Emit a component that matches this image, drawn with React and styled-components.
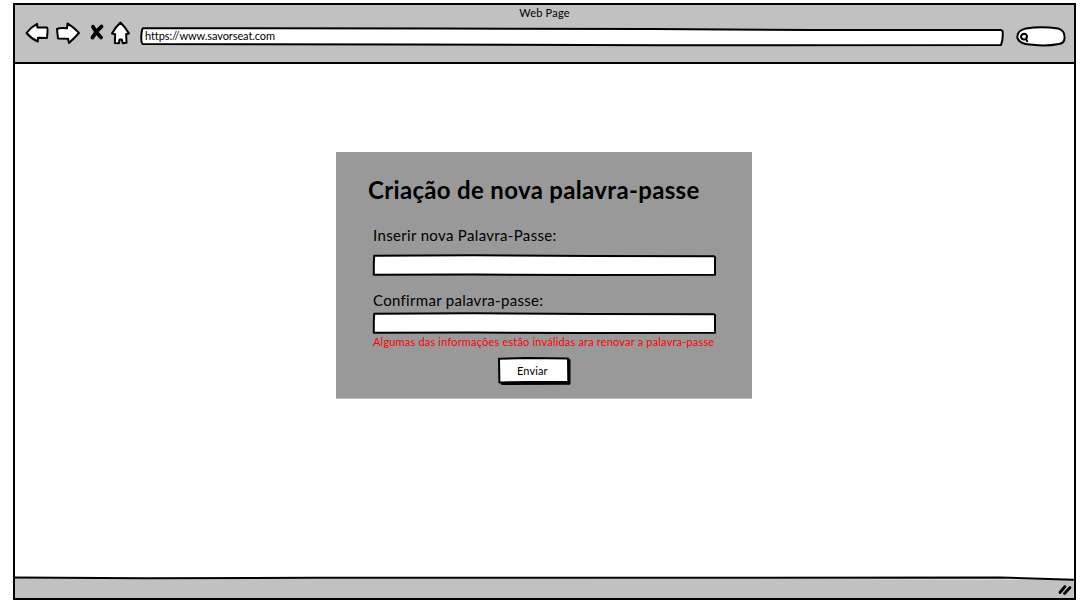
import React from "react";
import styled, { createGlobalStyle } from "styled-components";

const GlobalStyle = createGlobalStyle`
  * { box-sizing: border-box; }
  body { margin: 0; background: #fff; color: #000; font-family: Lato, "Open Sans", sans-serif; overflow: hidden; }
`;

const Page = styled.div`
  width: 1092px;
  height: 605px;
  padding: 3px 16px 5px 13px;
`;

const Browser = styled.div`
  height: 597px;
  display: flex;
  flex-direction: column;
  border: 2px solid #000;
  background: #fff;
`;

const Chrome = styled.header`
  height: 59px;
  flex: none;
  background: #c1c1c1;
  border-bottom: 2px solid #000;
`;

const Text = styled.span`
  display: block;
  white-space: nowrap;
  font-size: ${(p) => p.$size || 11}px;
  line-height: ${(p) => p.$line || 14}px;
  letter-spacing: ${(p) => p.$track || 0}px;
  font-weight: ${(p) => (p.$bold ? 700 : 400)};
  color: ${(p) => p.$color || "#000"};
`;

const WindowTitle = styled.div`
  height: 15px;
  padding-top: 1px;
  display: flex;
  justify-content: center;
`;

const Toolbar = styled.nav`
  display: flex;
  align-items: flex-start;
  padding-left: 10px;
`;

const Icon = styled.svg`
  display: block;
  flex: none;
  overflow: visible;
  fill: #fff;
  stroke: #000;
  stroke-width: 2;
  stroke-linejoin: round;
  stroke-linecap: round;
`;

const CrossStroke = styled.path`
  fill: none;
  stroke-width: 3.8;
`;

const Sketch = styled.div`
  position: relative;
  flex: none;
  width: ${(p) => p.$w}px;
  height: ${(p) => p.$h}px;
`;

const Outline = styled(Icon)`
  position: absolute;
  inset: 0;
`;

const AddressBar = styled(Sketch)`
  margin: 7px 0 0 11px;
`;

const Address = styled(Text)`
  position: relative;
  padding: 2px 0 0 5px;
`;

const SearchBox = styled(Sketch)`
  margin: 6px 0 0 10px;
`;

const Content = styled.main`
  flex: 1;
  display: flex;
  justify-content: center;
  align-items: flex-start;
  padding: 88px 1px 0 0;
`;

const Panel = styled.form`
  width: 416px;
  height: 247px;
  padding: 24px 36px 0 37px;
  background: #999;
  border-bottom: 1px solid #bbb;
  display: flex;
  flex-direction: column;
`;

const Heading = styled.h1`
  margin: 0 0 20px -5px;
  height: 30px;
  font: inherit;
`;

const Label = styled.label`
  height: ${(p) => p.$h}px;
`;

const Gap = styled.div`
  height: 15px;
`;

const ErrorLine = styled.div`
  height: 23px;
  padding-top: 1px;
`;

const SendButton = styled(Sketch)`
  margin-left: 124px;
  display: flex;
  padding: 8px 0 0 20px;
`;

const ButtonLabel = styled(Text)`
  position: relative;
`;

const ButtonShadow = styled.path`
  fill: #000;
`;

const StatusBar = styled.footer`
  height: 21px;
  flex: none;
  display: flex;
  justify-content: flex-end;
  align-items: flex-start;
  position: relative;
`;

const StatusFill = styled.path`
  fill: #c1c1c1;
  stroke: none;
`;

const Grip = styled(Icon)`
  position: relative;
  margin: 7px 2px 0 0;
  stroke-width: 2.8;
`;

function Field() {
  return (
    <Sketch $w={343} $h={21}>
      <Outline width="343" height="21">
        <path d="M1.2 1.7 L100 1.3 L220 1.9 L341 2.2 Q342.5 2.6 342 5 L342 20.8 L210 21 L100 20.6 L.8 20.8 L.8 10 Z" />
      </Outline>
    </Sketch>
  );
}

export default function App() {
  return (
    <>
      <GlobalStyle />
      <Page>
        <Browser>
          <Chrome>
            <WindowTitle><Text $track={0.22}>Web Page</Text></WindowTitle>
            <Toolbar>
              <Icon width="104" height="26" viewBox="25 20 104 26">
                <path d="M26.5 33 Q31 27 37 23.8 L37.5 27.6 L47 27.5 Q48 29 47.5 32 L47 38 L38 37.7 L37.8 41.5 Q31 38.5 26.5 33 Z" />
                <path d="M57 29 Q60 27.5 67 28.3 L67.5 23.4 Q74 27.5 79 33 Q74 38.5 69 43 L68 38.7 L58 38.4 L57.5 34 Z" />
                <CrossStroke d="M93 26.8 Q96 32.5 101 37.5 M101.5 26.5 Q96 31 92.5 37.5" />
                <path d="M120.5 22.5 Q125 27 129 33.5 L126.2 34 L126.5 42.7 L122.7 43.3 L121.8 39.5 L119.5 39.5 L119 43.2 L114.8 43 L115.2 34.3 L112 33.5 Q115 27.5 120.5 22.5 Z" />
              </Icon>
              <AddressBar $w={866} $h={20}>
                <Outline width="866" height="20">
                  <path d="M3 1.2 L300 1.5 L510 2 L670 3 L860.5 3 Q863.2 3 862.7 7 Q863 13 861 18 L520 18.2 L270 17.5 L3 17 Q1 16 1.3 10 Q1.5 3 3 1.2 Z" />
                </Outline>
                <Address $track={-0.09}>https://www.savorseat.com</Address>
              </AddressBar>
              <SearchBox $w={50} $h={22}>
                <Outline width="50" height="22">
                  <path d="M10 2.4 Q25 0 42 2.4 Q49 5 48.5 11 Q49 17 43 18 Q30 20.5 17 18.8 Q3 18.5 1.3 11.5 Q1 4.5 10 2.4 Z" />
                  <path d="M11 11 Q11 8 8 7.8 Q5 8.5 5 11.2 Q6 14 8.5 13.5 Q11 13 11 10.5 M10 13 L11.2 15.2" />
                </Outline>
              </SearchBox>
            </Toolbar>
          </Chrome>
          <Content>
            <Panel>
              <Heading><Text $size={24} $line={28} $bold $track={0.33}>Criação de nova palavra-passe</Text></Heading>
              <Label $h={28}><Text $size={15} $line={18} $track={0.34}>Inserir nova Palavra-Passe:</Text></Label>
              <Field />
              <Gap />
              <Label $h={22}><Text $size={15} $line={20} $track={0.3}>Confirmar palavra-passe:</Text></Label>
              <Field />
              <ErrorLine><Text $line={16} $color="#ff0000" $track={0.18}>Algumas das informações estão inválidas ara renovar a palavra-passe</Text></ErrorLine>
              <SendButton $w={75} $h={29}>
                <Outline width="75" height="29">
                  <ButtonShadow d="M4 5 L72.5 4 L72.5 27.8 L5 28 Z" />
                  <path d="M2 2.8 L30 2 L71 2.5 L71.3 26 L36 26 L2.4 26.5 Z" />
                </Outline>
                <ButtonLabel $track={0.12}>Enviar</ButtonLabel>
              </SendButton>
            </Panel>
          </Content>
          <StatusBar>
            <Outline width="1058" height="21">
              <StatusFill d="M0 1 L130 1.6 L985 1 L1059 3 L1059 21 L0 21 Z" />
              <path d="M0 .6 L130 1.3 L300 .8 L985 .6 L1058 2.7" />
            </Outline>
            <Grip width="14" height="11">
              <path d="M2 8.5 L7 2.5 M6.5 9.5 L12 3.5" />
            </Grip>
          </StatusBar>
        </Browser>
      </Page>
    </>
  );
}
